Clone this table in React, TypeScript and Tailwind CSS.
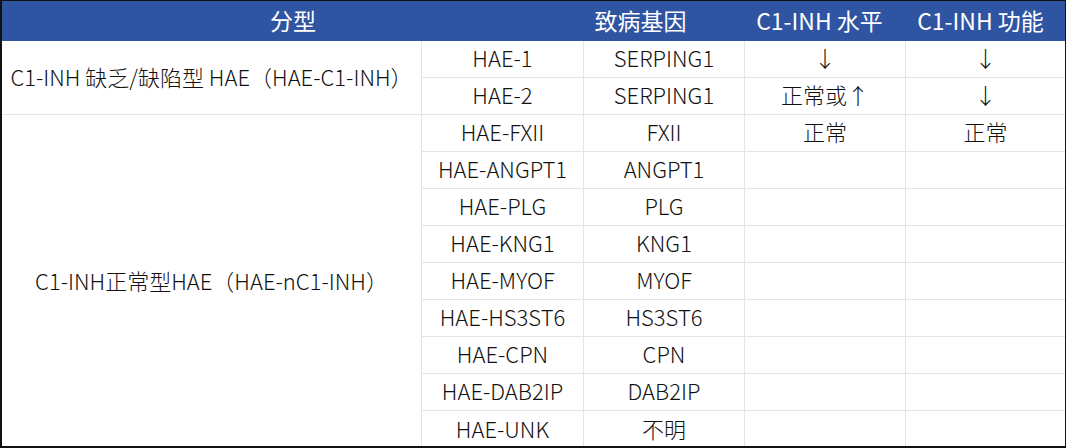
const rows: { sub: string; gene: string; level?: string; func?: string }[] = [
  { sub: "HAE-1", gene: "SERPING1", level: "↓", func: "↓" },
  { sub: "HAE-2", gene: "SERPING1", level: "正常或↑", func: "↓" },
  { sub: "HAE-FXII", gene: "FXII", level: "正常", func: "正常" },
  { sub: "HAE-ANGPT1", gene: "ANGPT1" },
  { sub: "HAE-PLG", gene: "PLG" },
  { sub: "HAE-KNG1", gene: "KNG1" },
  { sub: "HAE-MYOF", gene: "MYOF" },
  { sub: "HAE-HS3ST6", gene: "HS3ST6" },
  { sub: "HAE-CPN", gene: "CPN" },
  { sub: "HAE-DAB2IP", gene: "DAB2IP" },
  { sub: "HAE-UNK", gene: "不明" },
];

const cell = "flex items-center justify-center pb-[3px] border-[#e4e4e4]";

const App = () => {
  return (
    <div
      className="w-[1066px] h-[448px] overflow-hidden bg-white border-l-2 border-t border-r border-b-2 border-[#111] text-[22px] font-light text-[#111]"
      style={{ fontFamily: '"Noto Sans CJK SC", "Noto Sans", sans-serif' }}
    >
      {/* header */}
      <div className="grid grid-cols-[582px_161px_161px_159px] h-10 bg-[#2f54a1] text-white text-[23px] font-normal">
        <div className="flex items-center justify-center pb-[2px]">分型</div>
        <div className="flex items-center justify-center pb-[2px] pr-[48px]">致病基因</div>
        <div className="flex items-center justify-center pb-[2px] pr-[12px] whitespace-nowrap">C1-INH 水平</div>
        <div className="flex items-center justify-center pb-[2px] pr-[10px] whitespace-nowrap">C1-INH 功能</div>
      </div>

      {/* body */}
      <div className="grid grid-cols-[420px_162px_161px_161px_159px] grid-rows-[repeat(11,37px)]">
        <div className={`${cell} row-span-2 border-r border-b whitespace-nowrap`}>
          C1-INH 缺乏/缺陷型 HAE（HAE-C1-INH）
        </div>
        {rows.map((r, i) => {
          const last = i === rows.length - 1;
          const b = last ? "" : "border-b";
          return (
            <div key={r.sub} className="contents">
              {i === 2 && (
                <div className={`${cell} row-span-9 border-r whitespace-nowrap`}>
                  C1-INH正常型HAE（HAE-nC1-INH）
                </div>
              )}
              <div className={`${cell} border-r ${b}`}>{r.sub}</div>
              <div className={`${cell} border-r ${b}`}>{r.gene}</div>
              <div className={`${cell} border-r ${b}`}>{r.level ?? ""}</div>
              <div className={`${cell} ${b}`}>{r.func ?? ""}</div>
            </div>
          );
        })}
      </div>
    </div>
  );
};

export default App;
